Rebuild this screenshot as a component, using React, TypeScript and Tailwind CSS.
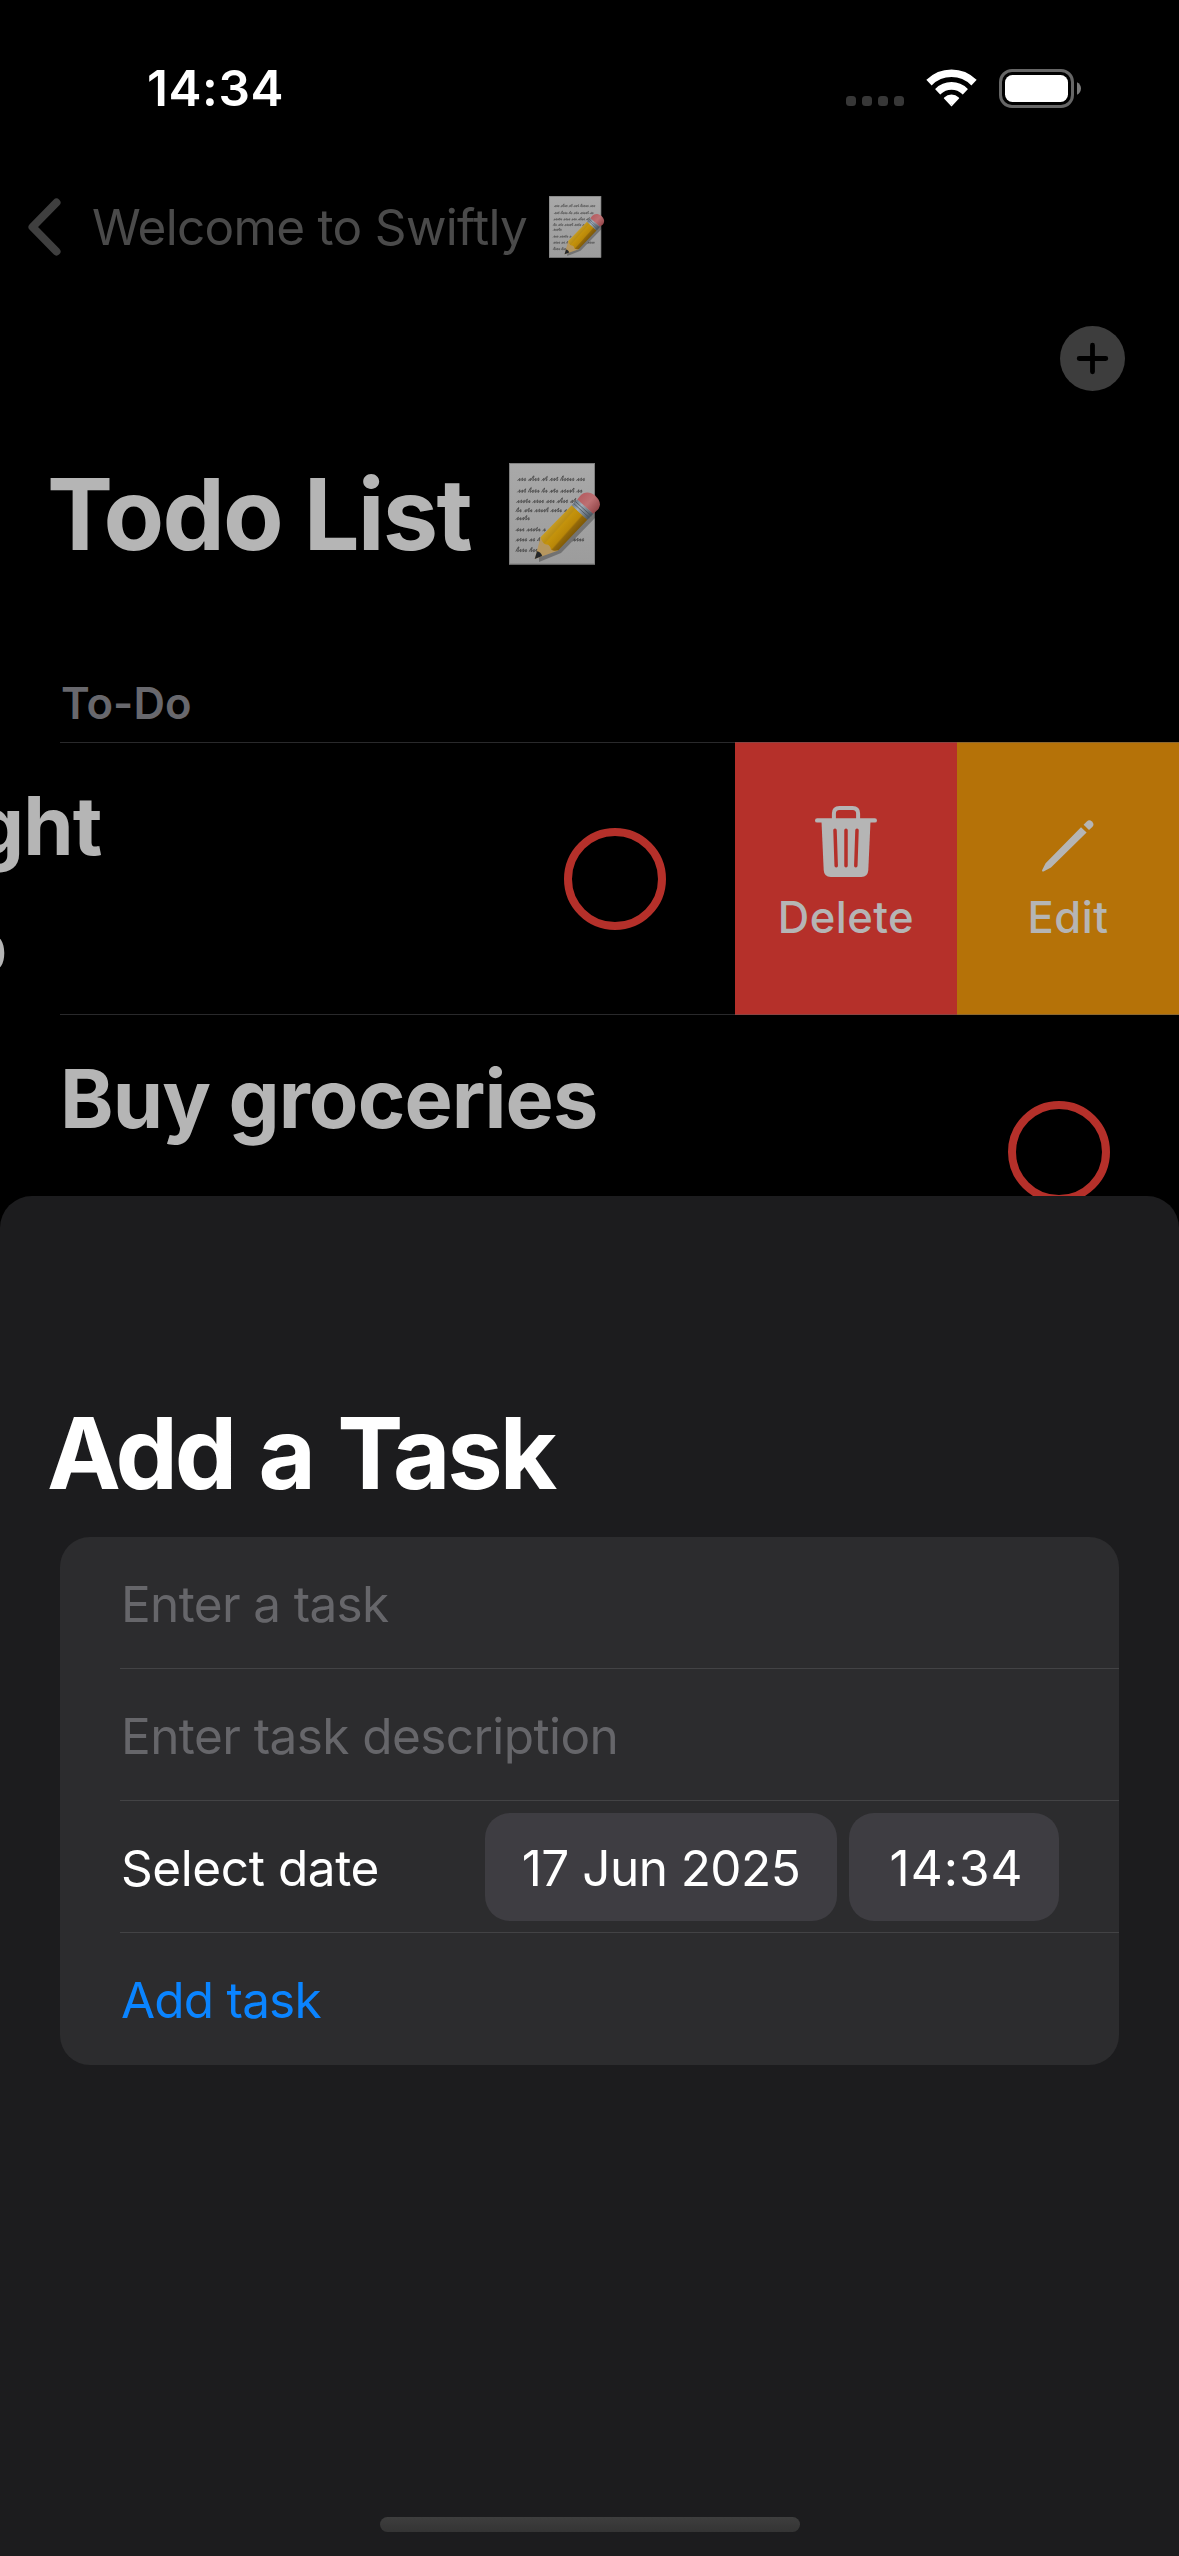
import type { ReactNode } from "react";

function SignalDots() {
  return (
    <div className="mt-[26px] flex gap-[6px]">
      {[0, 1, 2, 3].map((i) => (
        <span key={i} className="size-[10px] rounded-[3.5px] bg-[#373737]" />
      ))}
    </div>
  );
}

function Wifi() {
  return (
    <svg width="51" height="38" viewBox="0 0 51 38">
      <defs>
        <clipPath id="wedge">
          <path d="M25.5 37.5L-11 -1H62Z" />
        </clipPath>
      </defs>
      <g clipPath="url(#wedge)" fill="none" stroke="#fff" strokeWidth="7.6">
        <circle cx="25.5" cy="35.8" r="31.6" />
        <circle cx="25.5" cy="35.8" r="18.9" />
        <circle cx="25.5" cy="35.8" r="5" strokeWidth="10.6" />
      </g>
    </svg>
  );
}

function Battery() {
  return (
    <svg width="83" height="39" viewBox="0 0 83 39">
      <rect x="1.5" y="1.5" width="72" height="36" rx="11.5" fill="none" stroke="#666" strokeWidth="3" />
      <rect x="6" y="6" width="63" height="27" rx="7.5" fill="#fff" />
      <path d="M78 13.2C80.4 14.2 82 16.6 82 19.5S80.4 24.8 78 25.8Z" fill="#7a7a7a" />
    </svg>
  );
}

// Builds one line of slanted, looping handwriting between two x positions.
function scribble(x1: number, x2: number, y: number) {
  const heights = [5.6, 2, 2.6, 1.8, 2.2, 4.8, 1.9, 2.4, 2, 3.8, 1.8];
  const words = [4, 2, 3, 5, 4, 3];
  let d = `M${x1} ${y}`;
  let i = 0;
  let word = Math.round(y) % words.length;
  let left = words[word];
  for (let x = x1; x < x2 - 1.5; i++) {
    if (left === 0) {
      x += 2.6;
      d += `M${x} ${y}`;
      word = (word + 1) % words.length;
      left = words[word];
      continue;
    }
    const h = heights[(i + Math.round(y)) % heights.length];
    d += `C${x + 1.4} ${y - h * 0.6} ${x + 2.6 + h * 0.2} ${y - h - 1} ${x + 1.7 + h * 0.15} ${y - h * 0.5}S${x + 1.4} ${y + 0.6} ${x + 2.7} ${y - 0.3}`;
    x += 2.7;
    left--;
  }
  return d;
}

const handwriting = [
  [8.7, 76, 17.3],
  [8.7, 74, 29],
  [7.7, 69, 39.3],
  [7, 59, 48.5],
  [7, 21, 56.5],
  [7, 38, 67.7],
  [7, 31, 77.7],
  [64, 74, 77.7],
  [7, 29, 88.3],
];

function Memo({ id, className }: { id: string; className: string }) {
  return (
    <svg className={className} viewBox="0 0 94 102" role="img" aria-label="memo">
      <defs>
        <linearGradient id={`${id}-paper`} x1="0" y1="0" x2="0" y2="1">
          <stop offset="0" stopColor="#a9a9a9" />
          <stop offset="1" stopColor="#9c9c9c" />
        </linearGradient>
        <linearGradient id={`${id}-body`} gradientUnits="userSpaceOnUse" x1="46" y1="57" x2="64" y2="73">
          <stop offset="0" stopColor="#c99f25" />
          <stop offset="0.3" stopColor="#b98d14" />
          <stop offset="0.36" stopColor="#c4930c" />
          <stop offset="0.68" stopColor="#b98708" />
          <stop offset="0.75" stopColor="#93690a" />
          <stop offset="1" stopColor="#7d5806" />
        </linearGradient>
        <linearGradient id={`${id}-metal`} gradientUnits="userSpaceOnUse" x1="65" y1="39" x2="81" y2="54">
          <stop offset="0" stopColor="#6a7785" />
          <stop offset="0.35" stopColor="#a3afba" />
          <stop offset="1" stopColor="#4a545e" />
        </linearGradient>
        <linearGradient id={`${id}-eraser`} gradientUnits="userSpaceOnUse" x1="72" y1="32" x2="90" y2="48">
          <stop offset="0" stopColor="#b55d61" />
          <stop offset="0.45" stopColor="#bd7073" />
          <stop offset="1" stopColor="#8e4144" />
        </linearGradient>
      </defs>
      <rect width="86" height="101.5" fill={`url(#${id}-paper)`} />
      <rect x="0.5" y="0.5" width="85" height="100.5" fill="none" stroke="#7f7f7f" />
      <g fill="none" stroke="#2e2e2e" strokeWidth="0.7" strokeLinecap="round">
        {handwriting.map(([a, b, y]) => (
          <path key={`${a}-${y}`} d={scribble(a, b, y)} />
        ))}
      </g>
      <path d="M30 99L52 90L86 55L90 48L86 46L30 94Z" fill="#000" opacity="0.28" />
      <path d="M25.7 96L31.7 74L49.3 87.5Z" fill="#b6975f" />
      <path d="M25.7 96L28 88.2C30.5 88.5 32.5 90.5 33.2 93Z" fill="#24272a" />
      <path d="M31.7 74L62.7 42.3L78.3 56.7L49.3 87.3C47 88 44 88 42 86.5C41.5 83.5 40 81.5 37.5 81.5C34.5 81 32.5 78 31.7 74Z" fill={`url(#${id}-body)`} />
      <path d="M62.7 42.3L68.3 36.5L84.3 50.7L78.3 56.7Z" fill={`url(#${id}-metal)`} />
      <path d="M64.6 40.4L80.3 54.8M66.4 38.5L82.3 52.8" stroke="#48525c" strokeWidth="0.8" />
      <path d="M68.3 36.5L71 33C75 28.5 81 28.5 86 32.5C91 37 92.5 42 89 46.5L84.3 50.7Z" fill={`url(#${id}-eraser)`} />
    </svg>
  );
}

function TrashIcon() {
  return (
    <svg width="62" height="71" viewBox="0 0 62 71">
      <path d="M18.9 14V7.5Q18.9 2 24.4 2H37.6Q43.1 2 43.1 7.5V14" fill="none" stroke="#b5b5b5" strokeWidth="4" />
      <rect y="12.2" width="62" height="4.4" rx="2.2" fill="#b5b5b5" />
      <path d="M6.5 15.5H55.5L53.3 64Q52.9 71 46.3 71H15.7Q9.1 71 8.7 64Z" fill="#b5b5b5" />
      <path d="M20 24.3L21.2 59.7M31 24.3V59.7M42 24.3L40.8 59.7" stroke="#b5302a" strokeWidth="3.5" strokeLinecap="round" />
    </svg>
  );
}

function PencilIcon() {
  return (
    <svg width="52" height="52" viewBox="0 0 52 52" fill="#b5b5b5">
      <path d="M0.6 51.5Q-0.3 51.2 0.2 50L3.6 43.2L39 7.2L44.6 12.4L9 47.6L2 51.2Q1.2 51.7 0.6 51.5Z" />
      <path d="M41.6 4.7L44.8 1.5Q47.3 -0.9 50 1.6Q52.8 4.4 50.3 6.9L47 10Z" />
    </svg>
  );
}

function SwipeAction({ label, className, children }: { label: string; className: string; children: ReactNode }) {
  return (
    <button className={`flex w-[222px] flex-col items-center pt-[64px] text-[#b5b5b5] ${className}`}>
      <span className="flex h-[71px] items-center">{children}</span>
      <span className="mt-[15px] text-[43.6px] leading-[52px] font-medium tracking-[0.45px]">{label}</span>
    </button>
  );
}

function Ring({ className }: { className: string }) {
  return <span className={`size-[102px] shrink-0 rounded-full border-[8.6px] border-[#b5302a] ${className}`} />;
}

function FormRow({ last, children }: { last?: boolean; children: ReactNode }) {
  return (
    <div className={`ml-[60px] flex h-[132px] items-center pr-[60px] ${last ? "" : "border-b border-[#434345]"}`}>
      {children}
    </div>
  );
}

export default function App() {
  return (
    <div className="flex h-[2556px] w-[1179px] flex-col overflow-hidden bg-black font-['Inter',sans-serif] whitespace-nowrap">
      <header className="flex h-[176px] shrink-0 items-center pr-[97px] pl-[147px] text-white">
        <span className="text-[49.5px] leading-[60px] font-semibold tracking-[0.6px]">14:34</span>
        <div className="ml-auto flex items-center">
          <SignalDots />
          <div className="ml-[22px]">
            <Wifi />
          </div>
          <div className="ml-[22px]">
            <Battery />
          </div>
        </div>
      </header>

      <nav className="flex h-[102px] shrink-0 items-center pl-[28px]">
        <svg width="34" height="58" viewBox="0 0 34 58" fill="none" stroke="#3f3f3f" strokeWidth="8" strokeLinecap="round" strokeLinejoin="round">
          <path d="M28.5 4.5L4.5 29L28.5 53.5" />
        </svg>
        <span className="ml-[30px] w-[457px] text-[49.5px] leading-[60px] tracking-[-0.7px] text-[#4a4a4a]">Welcome to Swiftly</span>
        <Memo id="nav" className="h-[62px] w-[57px]" />
      </nav>

      <div className="mt-[48px] flex shrink-0 justify-end pr-[54px]">
        <svg width="65" height="65" viewBox="0 0 65 65">
          <circle cx="32.5" cy="32.5" r="32.5" fill="#3d3d3d" />
          <path d="M32.5 19.2V45.8M19.2 32.5H45.8" stroke="#000" strokeWidth="4.8" strokeLinecap="round" />
        </svg>
      </div>

      <h1 className="mt-[63px] flex h-[120px] shrink-0 items-center pl-[47px] text-[99px] leading-[120px] font-bold tracking-[-1.8px] text-[#b5b5b5]">
        <span className="w-[462px]">Todo List</span>
        <Memo id="title" className="h-[102px] w-[94px]" />
      </h1>

      <h2 className="mt-[104px] mb-[12px] shrink-0 pl-[61px] text-[43.6px] leading-[52px] font-semibold tracking-[0.08px] text-[#68686d]">To-Do</h2>

      <section className="h-[454px] shrink-0 overflow-hidden">
        <div className="relative flex h-[273px]">
          <div className="relative flex w-[735px] justify-between overflow-hidden pr-[69px] text-[#b5b5b5]">
            <div className="pt-[35px]">
              <div className="-ml-[27px] text-[81px] leading-[98px] font-bold tracking-[-0.88px]">ght</div>
              <div className="mt-[48px] -ml-[24px] text-[49.5px] leading-[60px]">0</div>
            </div>
            <Ring className="mt-[86px]" />
          </div>
          <SwipeAction label="Delete" className="bg-[#b5302a]">
            <TrashIcon />
          </SwipeAction>
          <SwipeAction label="Edit" className="bg-[#b57208]">
            <span className="pt-[8px]">
              <PencilIcon />
            </span>
          </SwipeAction>
          <div className="absolute top-0 right-0 left-[60px] h-px bg-[#5c5c60]/45" />
          <div className="absolute right-0 bottom-0 left-[60px] h-px bg-[#5c5c60]/45" />
        </div>
        <div className="flex justify-between pr-[69px] pl-[60px]">
          <div className="pt-[35px] text-[81px] leading-[98px] font-bold tracking-[-0.88px] text-[#b5b5b5]">Buy groceries</div>
          <Ring className="mt-[86px]" />
        </div>
      </section>

      <main className="flex flex-1 flex-col rounded-t-[32px] bg-[#1c1c1e] pt-[197px]">
        <h1 className="pl-[47px] text-[99px] leading-[120px] font-bold tracking-[-3.1px] text-white [word-spacing:4px]">Add a Task</h1>
        <div className="mx-[60px] mt-[24px] rounded-[30px] bg-[#2c2c2e] text-[49.5px] leading-[60px]">
          <FormRow>
            <span className="pt-[2px] pl-px tracking-[-0.65px] text-[#66666a]">Enter a task</span>
          </FormRow>
          <FormRow>
            <span className="pt-[2px] pl-px tracking-[-0.58px] text-[#66666a]">Enter task description</span>
          </FormRow>
          <FormRow>
            <span className="pt-[2px] pl-px tracking-[-0.42px] text-white">Select date</span>
            <span className="ml-auto flex h-[108px] w-[352px] items-center justify-center rounded-[25px] bg-[#3e3d42] pt-[2px] tracking-[-0.54px] text-white">17 Jun 2025</span>
            <span className="ml-[12px] flex h-[108px] w-[210px] items-center justify-center rounded-[25px] bg-[#3e3d42] pt-[2px] pl-[5px] tracking-[1px] text-white">14:34</span>
          </FormRow>
          <FormRow last>
            <span className="pt-[2px] pl-px tracking-[-0.8px] text-[#0a84ff]">Add task</span>
          </FormRow>
        </div>
        <div className="mx-auto mt-auto mb-[24px] h-[15px] w-[420px] rounded-full bg-linear-to-b from-[#3e3e3e] to-[#343434]" />
      </main>
    </div>
  );
}
